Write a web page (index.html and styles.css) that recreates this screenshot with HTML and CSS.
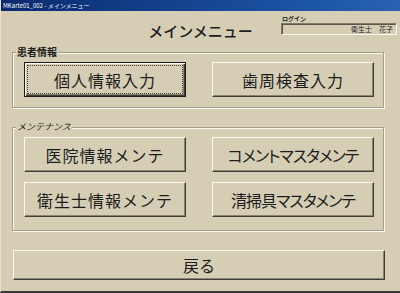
FILE: index.html
```html
<!DOCTYPE html>
<html lang="ja">

<head>
	<meta charset="UTF-8">
	<title>MKarte01_002 - メインメニュー</title>
	<link rel="stylesheet" href="styles.css">
</head>

<body>
	<div class="window">
		<div class="titlebar">MKarte01_002 - メインメニュー</div>

		<header class="head">
			<div></div>
			<h1 class="title">メインメニュー</h1>
			<div class="login">
				<span class="login-label">ログイン</span>
				<div class="login-box">衛生士　花子</div>
			</div>
		</header>

		<section class="group">
			<span class="group-label">患者情報</span>
			<div class="grid">
				<button class="btn focus"><span>個人情報入力</span></button>
				<button class="btn">歯周検査入力</button>
			</div>
		</section>

		<section class="group group2">
			<span class="group-label small">メンテナンス</span>
			<div class="grid">
				<button class="btn">医院情報メンテ</button>
				<button class="btn narrow">コメントマスタメンテ</button>
				<button class="btn">衛生士情報メンテ</button>
				<button class="btn narrow">清掃具マスタメンテ</button>
			</div>
		</section>

		<button class="btn back">戻る</button>
	</div>
</body>

</html>
```

FILE: styles.css
```css
body {
	margin: 0;
	background-color: #d5ceb5;
	font-family: "Noto Sans CJK JP", "Noto Sans", sans-serif;
	color: #1c1c1c;
}

.window {
	width: 400px;
	height: 293px;
	box-sizing: border-box;
	border-left: 1px solid #f3dcd2;
	border-bottom: 2px solid #3a3a36;
	overflow: hidden;
}

.titlebar {
	height: 11px;
	line-height: 11px;
	padding-left: 2px;
	font-size: 6px;
	color: #fff;
	background: linear-gradient(90deg, #0a2a6e, #1d56a8 80%, #2a62b0);
}

.head {
	display: grid;
	grid-template-columns: 1fr auto 1fr;
	height: 41px;
}

.title {
	margin: 11px 0 0;
	font-size: 15px;
	font-weight: 500;
	line-height: 18px;
}

.login {
	justify-self: end;
	margin: 4px 3px 0 0;
	display: flex;
	flex-direction: column;
}

.login-label {
	font-size: 6px;
	font-weight: bold;
	line-height: 8px;
	padding-left: 1px;
}

.login-box {
	width: 111px;
	height: 10px;
	line-height: 10px;
	padding-right: 3px;
	text-align: right;
	font-size: 7px;
	border-top: 1px solid #807a6a;
	border-left: 1px solid #807a6a;
	border-bottom: 1px solid #fbf8ef;
	border-right: 1px solid #fbf8ef;
	box-shadow: inset 1px 1px 0 #5c574a;
}

.group {
	position: relative;
	width: 372px;
	box-sizing: border-box;
	margin-left: 11px;
	padding: 9px 9px 10px 11px;
	border: 1px solid #a39d8a;
	box-shadow: inset 1px 1px 0 #fbf8ef, 1px 1px 0 #fbf8ef;
}

.group2 {
	margin-top: 19px;
	padding-bottom: 13px;
}

.group-label {
	position: absolute;
	top: -7px;
	left: 3px;
	padding: 0 1px;
	font-size: 10px;
	line-height: 12px;
	font-weight: bold;
	background-color: #d5ceb5;
}

.group-label.small {
	font-size: 9px;
	font-weight: normal;
	font-style: italic;
}

.grid {
	display: grid;
	grid-template-columns: 162px 162px;
	column-gap: 26px;
	row-gap: 10px;
}

.btn {
	height: 35px;
	padding: 0;
	font-family: inherit;
	font-size: 16px;
	color: #1c1c1c;
	letter-spacing: 1px;
	background-color: #d5ceb5;
	border-top: 1px solid #fbf8ef;
	border-left: 1px solid #fbf8ef;
	border-bottom: 1px solid #3e3d36;
	border-right: 1px solid #3e3d36;
	box-shadow: inset -1px -1px 0 #8a8472;
}

.btn.narrow {
	letter-spacing: -1px;
	font-feature-settings: "palt";
}

.btn.focus {
	border: 1px solid #1c1c1c;
	box-shadow: inset 1px 1px 0 #fbf8ef, inset -1px -1px 0 #3e3d36, inset -2px -2px 0 #8a8472;
	display: flex;
	padding: 2px;
}

.btn.focus span {
	flex: 1;
	display: flex;
	align-items: center;
	justify-content: center;
	border: 1px dotted #3e3d36;
}

.back {
	display: block;
	width: 372px;
	height: 30px;
	margin: 19px 0 0 12px;
	letter-spacing: 0;
}
```
